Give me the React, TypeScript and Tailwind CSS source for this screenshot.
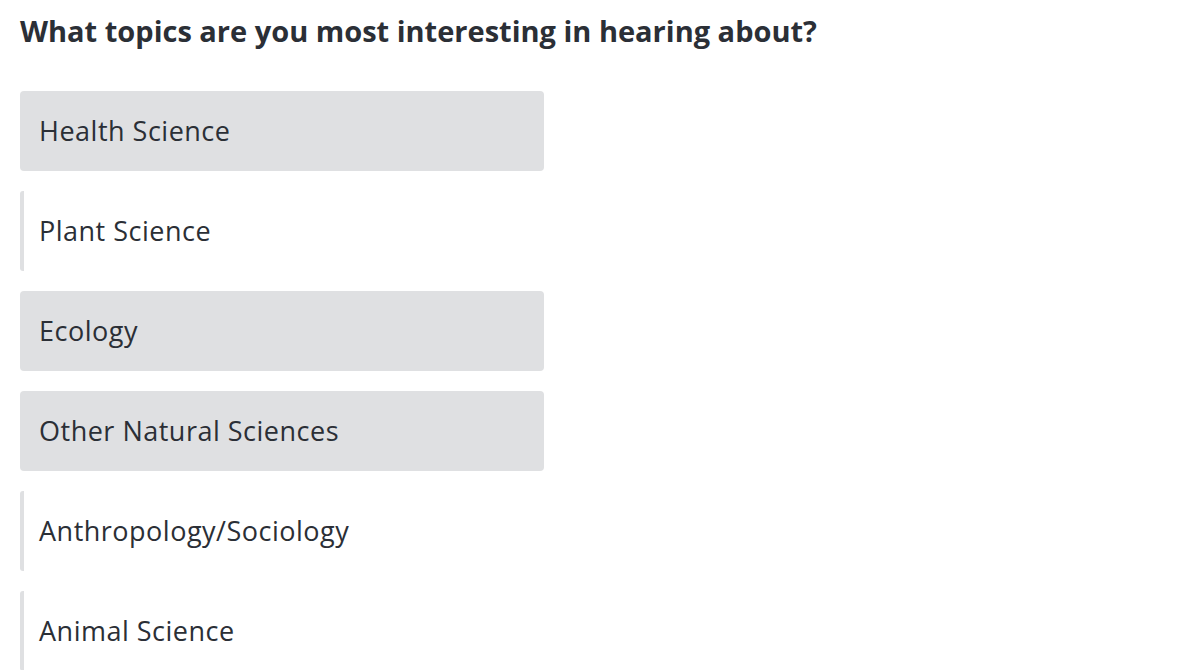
import React from "react";

const items: { label: string; selected: boolean }[] = [
  { label: "Health Science", selected: true },
  { label: "Plant Science", selected: false },
  { label: "Ecology", selected: true },
  { label: "Other Natural Sciences", selected: true },
  { label: "Anthropology/Sociology", selected: false },
  { label: "Animal Science", selected: false },
];

export default function App() {
  return (
    <div className="min-h-screen bg-white px-5 pt-[11px] text-[#2b2f36]" style={{ fontFamily: "'Open Sans', sans-serif" }}>
      <h1 className="text-[29px] font-bold leading-[40px]">What topics are you most interesting in hearing about?</h1>
      <div className="mt-[40px] flex w-[524px] flex-col gap-5">
        {items.map((it) => (
          <div
            key={it.label}
            className={
              it.selected
                ? "flex h-20 items-center rounded-[4px] bg-[#dfe0e2] pl-[19px] text-[27px] tracking-[0.5px]"
                : "flex h-20 items-center rounded-[3px] border-l-[4px] border-[#dfe0e2] pl-[15px] text-[27px] tracking-[0.5px]"
            }
          >
            {it.label}
          </div>
        ))}
      </div>
    </div>
  );
}
